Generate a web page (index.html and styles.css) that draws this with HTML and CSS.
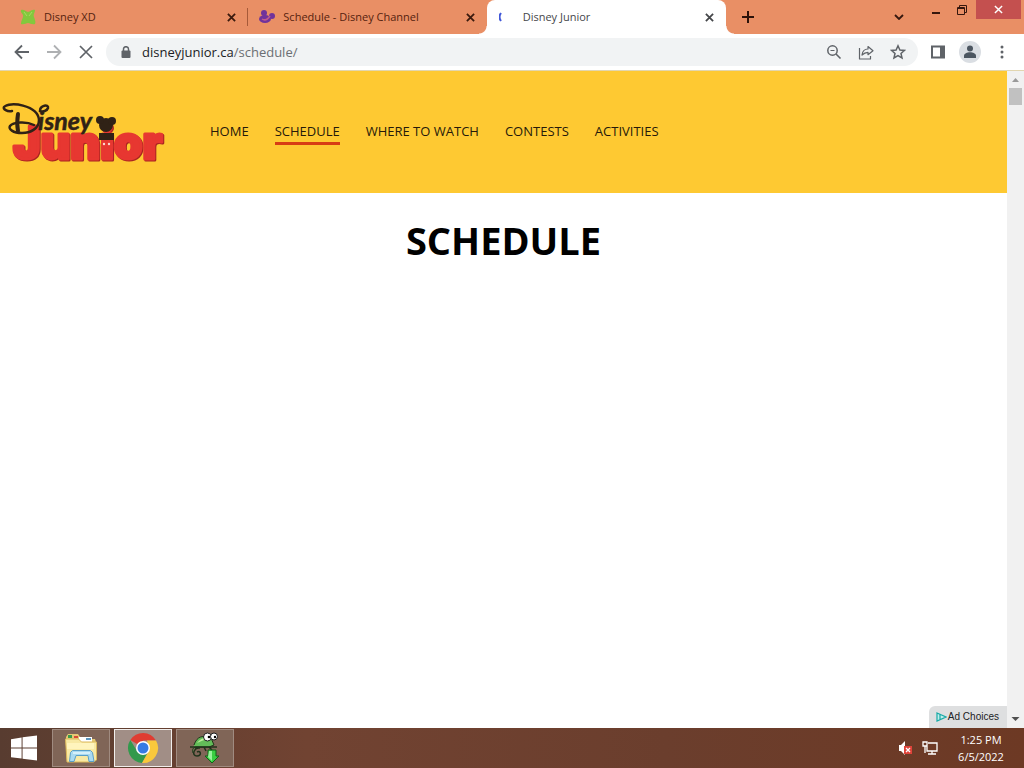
FILE: index.html
```html
<!DOCTYPE html>
<html lang="en">
<head>
<meta charset="utf-8">
<meta name="viewport" content="width=device-width, initial-scale=1">
<title>Disney Junior</title>
<link rel="stylesheet" href="styles.css">
</head>
<body>
<div class="screen">
  <header class="tab-strip">
    <div class="tabs">
      <div class="tab">
        <svg class="favicon" viewBox="0 0 16 16"><path fill="#83c83d" d="M1 1c3-1 5 2 7 2s4-3 7-2c0 3-2 4-1 7s2 5 1 7c-3 1-5-1-7-1s-4 2-7 1c0-3 1-4 2-7S0 4 1 1z"/><path fill="none" stroke="#a8dc62" d="M4 3l3 4M12 3L9 7"/></svg>
        <span class="tab-title">Disney XD</span>
        <button class="tab-close" aria-label="Close tab"><svg viewBox="0 0 10 10"><path d="M1 1l8 8M9 1L1 9"/></svg></button>
      </div>
      <div class="tab tab-divided">
        <svg class="favicon" viewBox="0 0 16 16"><g fill="#70339b"><circle cx="5" cy="4" r="3"/><circle cx="13" cy="7" r="3"/><ellipse cx="6" cy="10" rx="6" ry="4"/></g><path fill="none" stroke="#c05b8c" stroke-width="1.5" d="M3 10c3 2 6 0 8-3"/></svg>
        <span class="tab-title">Schedule - Disney Channel</span>
        <button class="tab-close" aria-label="Close tab"><svg viewBox="0 0 10 10"><path d="M1 1l8 8M9 1L1 9"/></svg></button>
      </div>
      <div class="tab tab-active">
        <svg class="favicon" viewBox="0 0 16 16"><path fill="none" stroke="#4057d8" stroke-width="2" d="M2 4Q-1 8 2 12"/></svg>
        <span class="tab-title">Disney Junior</span>
        <button class="tab-close" aria-label="Close tab"><svg viewBox="0 0 10 10"><path d="M1 1l8 8M9 1L1 9"/></svg></button>
      </div>
    </div>
    <button class="new-tab" aria-label="New tab"><svg viewBox="0 0 12 12"><path d="M6 0v12M0 6h12"/></svg></button>
    <div class="window-controls">
      <button class="tab-search" aria-label="Search tabs"><svg viewBox="0 0 10 6"><path d="M1 1l4 4 4-4"/></svg></button>
      <button class="win-button" aria-label="Minimize"><svg viewBox="0 0 10 10"><path stroke-width="2" d="M1 8h8"/></svg></button>
      <button class="win-button" aria-label="Restore"><svg viewBox="0 0 10 10"><path stroke-width="1" d="M.5 2.500h7v7h-7zM.5 3.500h7M2.500 2.500v-2h7v7h-2"/></svg></button>
      <button class="win-button win-close" aria-label="Close window"><svg viewBox="0 0 10 10"><path stroke-width="1.6" d="M1 1l8 8M9 1L1 9"/></svg></button>
    </div>
  </header>

  <div class="toolbar">
    <button class="tool" aria-label="Back"><svg viewBox="0 0 16 16"><path stroke-width="1.8" d="M15 8H2M8 1.500L1.500 8 8 14.500"/></svg></button>
    <button class="tool tool-off" aria-label="Forward"><svg viewBox="0 0 16 16"><path stroke-width="1.8" d="M1 8h13M8 1.500L14.500 8 8 14.500"/></svg></button>
    <button class="tool" aria-label="Stop loading"><svg viewBox="0 0 16 16"><path stroke-width="1.7" d="M2 2l12 12M14 2L2 14"/></svg></button>
    <div class="omnibox">
      <svg class="lock" viewBox="0 0 10 12"><rect y="4.500" x=".5" width="9" height="7.500" rx="1" fill="#5f6368"/><path fill="none" stroke="#5f6368" stroke-width="1.500" d="M2.500 5V3a2.500 2.300 0 0 1 5 0v2"/></svg>
      <a class="url" href="#schedule">disneyjunior.ca<span class="url-path">/schedule/</span></a>
      <button class="tool" aria-label="Zoom"><svg viewBox="0 0 16 16"><path stroke-width="1.6" d="M10 10l4.500 4.500"/><path stroke-width="1" d="M4.500 6.500h4"/><circle cx="6.500" cy="6.500" r="4.700" stroke-width="1.500"/></svg></button>
      <button class="tool" aria-label="Share"><svg viewBox="0 0 16 16"><path stroke-width="1.200" stroke-linejoin="round" d="M1.500 4v11h11v-3M4 11c.5-4 2.500-6 6-6V2.500l5 4.200-5 4V8.300c-2.500 0-4 .7-6 2.700z"/></svg></button>
      <button class="tool" aria-label="Bookmark this page"><svg viewBox="0 0 16 16"><path stroke-width="1.500" d="M8 1.800l1.900 4.200 4.500.4-3.400 3 1 4.500L8 11.500l-4 2.400 1-4.500-3.400-3 4.500-.4z"/></svg></button>
    </div>
    <button class="tool" aria-label="Side panel"><svg viewBox="0 0 16 16"><path stroke-width="2" d="M2 2.500h12v11H2z"/><path fill="#5f6368" stroke="none" d="M10 2h5v12h-5z"/></svg></button>
    <button class="profile" aria-label="Profile"><svg viewBox="0 0 22 22"><circle cx="11" cy="11" r="11" fill="#dadee3"/><circle cx="11" cy="7.500" r="3" fill="#4c5661"/><path fill="#4c5661" d="M5 17v-2c0-5 12-5 12 0v2z"/></svg></button>
    <button class="tool" aria-label="Menu"><svg viewBox="0 0 16 16"><g fill="#5f6368" stroke="none"><circle cx="8" cy="3" r="1.500"/><circle cx="8" cy="8" r="1.500"/><circle cx="8" cy="13" r="1.500"/></g></svg></button>
  </div>

  <div class="viewport">
    <div class="page">
      <div class="site-header">
        <a class="logo" href="#home" aria-label="Disney Junior">
          <svg viewBox="0 -6 168 74">
            <text class="junior-text" x="13" y="58">Junior</text>
            <path fill="#302216" d="M99 32h15v7H99z"/><g fill="#fbd9cf"><circle cx="104" cy="43" r="1.200"/><circle cx="109" cy="43" r="1.200"/></g>
            <path class="ink" stroke-width="2.500" d="M12 10C7 11 3 8 4 6c5-6 34-2 35 13 0 9-9 13-17 13-9 0-14-4-12-7 3-4 16-5 24-1"/>
            <path class="ink" stroke-width="4" d="M18 13c-1 6-1 12 0 17"/>
            <text class="disney-text" x="38" y="29">isney</text>
            <path class="ink" stroke-width="2.500" d="M40 10c0-6 9-7 8-3-1 3-5 4-8 3z"/>
            <g fill="#302216"><circle cx="106" cy="24" r="7"/><circle cx="100" cy="19" r="4"/><circle cx="112" cy="20" r="4"/></g>
          </svg>
        </a>
        <nav class="site-nav">
          <a href="#home">HOME</a>
          <a class="current" href="#schedule" aria-current="page">SCHEDULE</a>
          <a href="#watch">WHERE TO WATCH</a>
          <a href="#contests">CONTESTS</a>
          <a href="#activities">ACTIVITIES</a>
        </nav>
      </div>
      <main id="schedule"><h1>SCHEDULE</h1></main>
      <a class="ad-choices" href="#ads"><svg viewBox="0 0 11 10"><path fill="#c3eeec" stroke="#16aaa6" stroke-width="1.200" d="M1 1l9 4-9 4zM4 2.500v5"/></svg>Ad Choices</a>
    </div>
    <div class="scrollbar" aria-hidden="true">
      <svg class="arrow" viewBox="0 0 17 17"><path fill="#9a9a9a" d="M5 11l3.500-4 3.500 4z"/></svg>
      <div class="thumb"></div>
      <svg class="arrow arrow-end" viewBox="0 0 17 17"><path fill="#505050" d="M4.500 6h8l-4 4z"/></svg>
    </div>
  </div>

  <footer class="taskbar">
    <button class="start" aria-label="Start"><svg viewBox="0 0 27 26"><path fill="#fff" d="M0 4l11-2v10.500H0zM12 1.800L27 0v12.500H12zM0 13.500h11V24L0 22.500zM12 13.500h15V26l-15-1.800z"/></svg></button>
    <button class="task" aria-label="File Explorer"><svg viewBox="0 0 34 32"><path fill="#e5c873" d="M2 5l2-3h10l2 3h4l2 2h9l1 3v18l-3 2H3z"/><path fill="#3b9b4b" d="M4 3h4v3H4z"/><path fill="#d84a36" d="M10 4h4v2h-4z"/><path fill="#fff" d="M15 5h13v5H15z"/><path fill="#5a95bd" d="M22 6h5v2h-5z"/><path fill="#f8e9a4" stroke="#dcb95c" d="M1.500 7h13l3 3h15v18l-3 2H3z"/><path fill="#fff4bd" d="M3 11h27v6H3z"/><path fill="#a9daf1" stroke="#5b9fc7" d="M5.500 29.500l1-9 2-2h18l2 2 1.500 9h-5l-1-6H12l-2 6z"/><path fill="none" stroke="#e6f7fc" stroke-width="1.500" d="M9 21h17"/></svg></button>
    <button class="task task-active" aria-label="Google Chrome"><svg viewBox="0 0 32 32"><path fill="#df3d32" d="M3.300 8A15 15 0 0 1 29 8.500H16v7z"/><path fill="#32994c" d="M3.300 8A15 15 0 0 0 15 31l6.500-12L10 19z"/><path fill="#f9c83c" d="M29 8.500A15 15 0 0 1 15 31l7.500-13L20 8.500z"/><circle cx="16" cy="16" r="7" fill="#fff"/><circle cx="16" cy="16" r="5.500" fill="#377be4"/></svg></button>
    <button class="task" aria-label="Chameleon Downloader"><svg viewBox="0 0 34 32"><path fill="#63bd59" stroke="#20331b" d="M6 13C9 4 15 3 23 6l3 7-5 2H8c-3 0-4 3-3 6"/><path fill="#b9ec98" d="M9 11c4-5 8-6 13-4-5 0-8 2-13 4z"/><path fill="none" stroke="#20331b" stroke-width="1.500" d="M2 15h27M9 15l-2 3M16 15l2 4M12 16c-6-1-9 8-3 8 5 0 4-6 0-4M21 15l3 3"/><g fill="#fff" stroke="#1c1c1c"><circle cx="19.500" cy="5" r="4"/><circle cx="26" cy="4.500" r="3.500"/></g><circle cx="21" cy="5" r="1.300"/><circle cx="27" cy="5" r="1.200"/><path fill="#39cf42" stroke="#116318" d="M20 18h8v6h3l-7 7-7-7h3z"/><path fill="#97f39b" d="M21 19h3v10l-4-4z"/></svg></button>
    <div class="tray">
      <svg class="tray-icon" viewBox="0 0 16 16"><path fill="#fff" d="M2 5h2l4-4v14l-4-4H2z"/><path fill="#df4339" d="M7 6h8v8H7z"/><path fill="none" stroke="#fff" stroke-width="1.300" d="M9 8l4 4M13 8l-4 4"/></svg>
      <svg class="tray-icon" viewBox="0 0 16 16"><path fill="none" stroke="#fff" stroke-width="1.300" d="M6 3h9v8H5V6M10 11v3M6 14h8M1 2h4v4H1zM3 6v7"/></svg>
      <div class="clock"><time>1:25 PM</time><time>6/5/2022</time></div>
    </div>
  </footer>
</div>
</body>
</html>
```
FILE: styles.css
```css
* { box-sizing: border-box; }
body { margin: 0; font: 12px/16px "Open Sans", "Noto Sans", sans-serif; color: #202124; }
button { border: 0; padding: 0; background: none; display: flex; align-items: center; justify-content: center; flex: none; }
svg { display: block; flex: none; }
a { color: inherit; text-decoration: none; }

.screen { display: flex; flex-direction: column; min-height: 100vh; background: #fff; }

.tab-strip { display: flex; height: 34px; padding-left: 8px; background: #e98f65; }
.tabs { display: flex; flex: 0 1 718px; min-width: 0; }
.tab { display: flex; flex: 1 1 0; align-items: center; gap: 8px; min-width: 0; padding: 0 10px 0 12px; color: #55220f; position: relative; }
.tab-title { flex: 1; overflow: hidden; white-space: nowrap; font-size: 11px; }
.favicon { width: 16px; height: 16px; }
.tab-close { width: 12px; height: 16px; }
.tab-close svg { width: 9px; height: 9px; fill: none; stroke: #3b1a0e; stroke-width: 2; }
.tab-divided::before { content: ""; position: absolute; left: 0; top: 8px; bottom: 8px; width: 1px; background: #a65a39; }
.tab-active { background: #fff; border-radius: 8px 8px 0 0; color: #45474a; }
.tab-active .tab-close svg { stroke: #45474a; }
.tab-active::before, .tab-active::after { content: ""; position: absolute; bottom: 0; width: 8px; height: 8px; }
.tab-active::before { right: 100%; background: radial-gradient(circle at 0 0, transparent 7px, #fff 8px); }
.tab-active::after { left: 100%; background: radial-gradient(circle at 100% 0, transparent 7px, #fff 8px); }
.new-tab { width: 28px; margin-left: 8px; }
.new-tab svg { width: 12px; height: 12px; stroke: #2c120a; stroke-width: 2; }
.window-controls { display: flex; align-items: flex-start; margin-left: auto; padding-right: 3px; }
.window-controls svg { width: 10px; height: 10px; fill: none; stroke: #35170e; }
.tab-search { width: 24px; height: 34px; margin-right: 12px; }
.tab-search svg { height: 6px; stroke-width: 1.8; }
.win-button { width: 26px; height: 19px; }
.win-close { width: 45px; margin-left: 1px; background: #c4504f; }
.win-close svg { width: 9px; height: 9px; stroke: #fff; }

.toolbar { display: flex; align-items: center; height: 37px; gap: 8px; padding: 0 10px; border-bottom: 1px solid #e2d6b0; }
.tool { width: 24px; height: 28px; }
.tool svg { width: 16px; height: 16px; fill: none; stroke: #5f6368; }
.tool-off { opacity: .5; }
.omnibox { display: flex; flex: 1; align-items: center; gap: 8px; min-width: 0; height: 28px; border-radius: 14px; padding: 0 8px 0 15px; background: #f1f3f4; }
.lock { width: 10px; height: 12px; }
.url { flex: 1; min-width: 0; padding-left: 3px; font-size: 13px; white-space: nowrap; overflow: hidden; }
.url-path { color: #6b6f73; }
.profile { width: 24px; height: 28px; }
.profile svg { width: 22px; height: 22px; }

.viewport { display: flex; flex: 1; }
.page { display: flex; flex: 1; flex-direction: column; min-width: 0; }
.site-header { display: flex; align-items: center; gap: 42px; padding: 24px 0; background: #fec932; }
.logo svg { width: 168px; height: 74px; }
.disney-text { font: italic 700 25px "Lato", sans-serif; fill: #302216; stroke: #302216; stroke-width: .5px; }
.junior-text { font: 900 46px "Inter", sans-serif; fill: #e73731; stroke: #e73731; stroke-linejoin: round; stroke-width: 3px; filter: drop-shadow(1px 1px 0 #a82520); }
.ink { fill: none; stroke: #302216; stroke-linecap: round; }
.site-nav { display: flex; gap: 26px; font-size: 13px; font-weight: 500; color: #26190a; white-space: nowrap; }
.site-nav a { padding: 3px 0; border-bottom: 3px solid transparent; }
.site-nav .current { border-color: #d73c14; }
main { flex: 1; }
h1 { margin: 23px 0; font-size: 38px; line-height: 48px; font-weight: 700; text-align: center; color: #000; }
.ad-choices { display: flex; align-items: center; align-self: flex-end; gap: 1px; padding: 2px 8px 2px 7px; border-radius: 6px 0 0 0; background: #dedfe0; font: 10px/18px "Liberation Sans", sans-serif; }
.ad-choices svg { width: 11px; height: 10px; }
.scrollbar { display: flex; flex-direction: column; align-items: center; width: 17px; background: #f1f1f1; }
.arrow { width: 17px; height: 17px; }
.arrow-end { margin-top: auto; }
.thumb { width: 13px; height: 17px; background: #c1c1c1; }

.taskbar { display: flex; align-items: center; gap: 4px; height: 40px; background: linear-gradient(90deg, #583c30, #714332 30%, #6b3e2d 65%, #6d3924); }
.start { width: 48px; height: 40px; }
.start svg { width: 26px; height: 26px; }
.task { width: 58px; height: 38px; border: 1px solid #a08b80; background: #806557; }
.task svg { width: 34px; height: 32px; }
.task-active { border-color: #f1eeec; background: #a18e86; }
.task-active svg { width: 32px; }
.tray { display: flex; align-items: center; gap: 9px; margin-left: auto; padding-right: 19px; color: #fff; }
.tray-icon { width: 16px; height: 16px; }
.clock { display: flex; flex-direction: column; align-items: center; width: 48px; margin-left: 10px; font-size: 11px; line-height: 17px; white-space: nowrap; }
```
